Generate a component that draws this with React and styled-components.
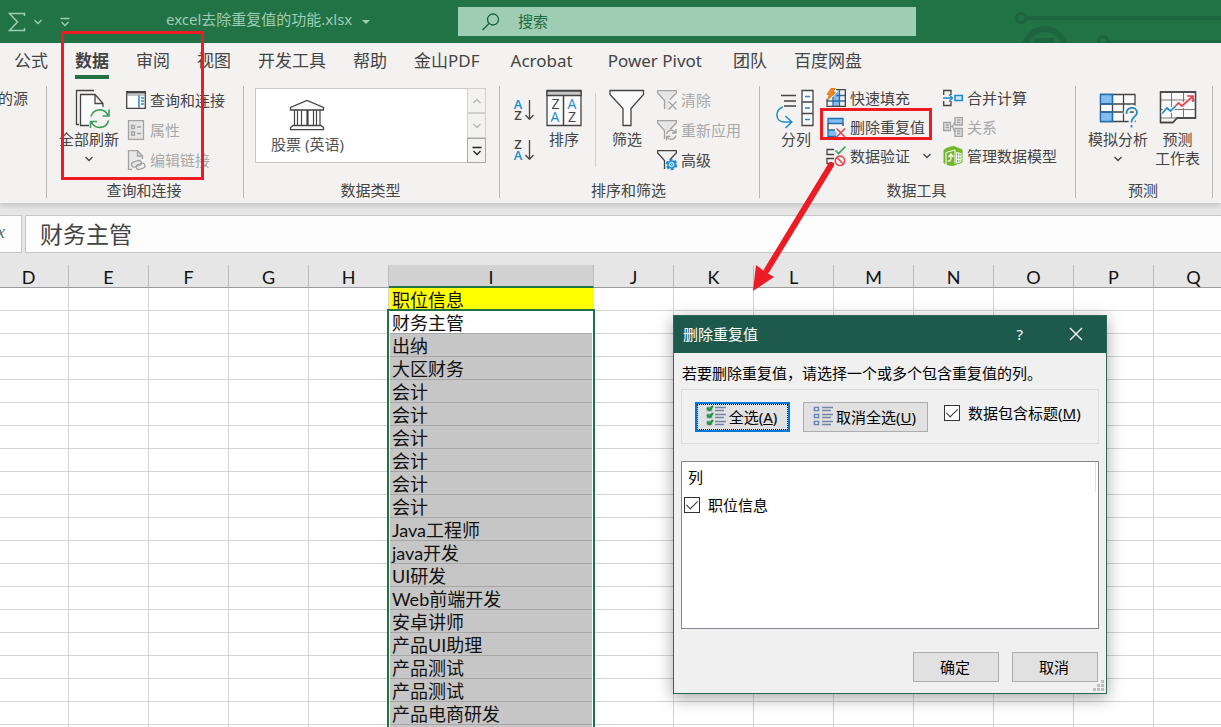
import { useState } from 'react'
import styled, { createGlobalStyle } from 'styled-components'

const UI_FONT = "'Noto Sans', 'Noto Sans CJK SC', sans-serif"
const CELL_FONT = "Lato, 'Noto Sans CJK SC', sans-serif"

const TABS = [
  '公式',
  '数据',
  '审阅',
  '视图',
  '开发工具',
  '帮助',
  '金山PDF',
  'Acrobat',
  'Power Pivot',
  '团队',
  '百度网盘'
]

const COLUMNS = ['D', 'E', 'F', 'G', 'H', 'I', 'J', 'K', 'L', 'M', 'N', 'O', 'P', 'Q']

const ROWS = [
  '职位信息',
  '财务主管',
  '出纳',
  '大区财务',
  '会计',
  '会计',
  '会计',
  '会计',
  '会计',
  '会计',
  'Java工程师',
  'java开发',
  'UI研发',
  'Web前端开发',
  '安卓讲师',
  '产品UI助理',
  '产品测试',
  '产品测试',
  '产品电商研发',
  ''
]

const GlobalStyle = createGlobalStyle`
  * {
    box-sizing: border-box;
  }
  body {
    margin: 0;
    overflow: hidden;
    font-family: ${UI_FONT};
    font-size: 15px;
    color: #444;
  }
  button,
  input {
    font: inherit;
    color: inherit;
  }
`

/* ---------- icons ---------- */

const Svg = styled.svg`
  display: block;
  flex: none;
  fill: none;
  stroke: ${({ $tone }) => $tone || '#444'};
  stroke-width: 1.3;
  overflow: visible;
`

const Icon = ({ w = 20, h = 20, tone, children }) => (
  <Svg width={w} height={h} viewBox={`0 0 ${w} ${h}`} $tone={tone} aria-hidden='true'>
    {children}
  </Svg>
)

const BLUE = '#1e8bcd'
const RED = '#e8414a'
const GREEN = '#3a9e57'
const GRAY = '#a3a3a3'

const Chevron = ({ tone }) => (
  <Icon w={8} h={6} tone={tone}>
    <path d='M.5 1L4 4.5 7.5 1' />
  </Icon>
)

const SigmaIcon = () => (
  <Icon w={18} h={20} tone='#9fcdb3'>
    <path d='M16.5 4V1.5H1.5L9.5 10 1.5 18.5H16.5V16' strokeWidth='1.5' />
  </Icon>
)

const CustomizeIcon = () => (
  <Icon w={10} h={10} tone='#9fcdb3'>
    <path d='M.5 1.5H9.5M1.5 5L5 8.5 8.5 5' />
  </Icon>
)

const SearchIcon = () => (
  <Icon w={18} h={18} tone='#1d5c3a'>
    <circle cx='11' cy='6.5' r='5.5' />
    <path d='M7 10.5L.5 17' />
  </Icon>
)

const RefreshAllIcon = () => (
  <Icon w={40} h={40}>
    <path d='M10 36.500H7.500V2.500H25' />
    <path d='M20 37.500H11.500V6.500H26L34 15.500V20H26L21 26Z' fill='#fafafa' stroke='none' />
    <path d='M20 37.500H11.500V6.500H26L34 15.500V19' />
    <path d='M26 6.500V15.500H34' />
    <g stroke={GREEN} strokeWidth='1.600'>
      <path d='M22 28.500A9 9 0 0 1 39 27.500M40 21.500V28H33.500' />
      <path d='M39.500 32.500A9 9 0 0 1 22.500 34M21.500 40V33.500H28' />
    </g>
  </Icon>
)

const QueriesIcon = () => (
  <Icon>
    <path d='M.7 1.700H19.300V18.300H.7Z' fill='#fff' />
    <path d='M.7 2.500H19.300' strokeWidth='2' />
    <path d='M.7 5H19.300' stroke='#888' strokeWidth='1' />
    <path d='M13 5.500V18' stroke={BLUE} strokeWidth='1.500' />
    <path d='M15 8H18M15 11H18M15 14H18' stroke={BLUE} />
  </Icon>
)

const PropertiesIcon = () => (
  <Icon tone={GRAY}>
    <path d='M2.500.700H17.500V19.300H2.500Z' fill='#e6e6e6' />
    <path d='M5.500 5.500H8.500V8.500H5.500ZM5.500 12H8.500V15H5.500ZM11 7H15M11 13.500H15' />
  </Icon>
)

const EditLinksIcon = () => (
  <Icon tone={GRAY}>
    <path d='M6 19.300H2.500V.700H11.500L16.500 6V9' fill='#e9e9e9' />
    <path d='M11.500.700V6H16.500' />
    <rect x='5.500' y='11.500' width='10' height='5' rx='2.500' transform='rotate(-18 10 14)' />
    <rect x='10' y='14' width='9' height='5' rx='2.500' transform='rotate(-18 14 16)' />
  </Icon>
)

const BankIcon = () => (
  <Icon w={36} h={32}>
    <path d='M1.500 11V8.500L18 1.500 34.500 8.500V11Z' fill='#fafafa' />
    <path d='M5.500 11V26M8.500 11V26M12.500 11V26M18 11V26M19 11V26M24.500 11V26M27.500 11V26M31 11V26' strokeWidth='1.200' />
    <path d='M4 26.500H32L34.500 28.500V30.700H1.500V28.500Z' fill='#fafafa' />
  </Icon>
)

const IconLetter = styled.text`
  font-family: 'Open Sans', sans-serif;
  font-size: ${({ $size }) => $size}px;
  font-weight: ${({ $bold }) => ($bold ? 600 : 400)};
  fill: ${({ $blue }) => ($blue ? BLUE : '#444')};
  stroke: none;
  text-anchor: middle;
`

const SortIcon = ({ desc }) => (
  <Icon w={20} h={24}>
    <IconLetter x='4' y='11' $size={13} $bold $blue={!desc}>
      {desc ? 'Z' : 'A'}
    </IconLetter>
    <IconLetter x='4' y='22' $size={13} $bold $blue={desc}>
      {desc ? 'A' : 'Z'}
    </IconLetter>
    <path d='M15.500 2V21M11.500 17L15.500 21.300 19.500 17' />
  </Icon>
)

const SortDialogIcon = () => (
  <Icon w={36} h={40}>
    <path d='M1 2.500H35V37.500H1Z' fill='#fafafa' />
    <path d='M1 3H35V7.500H1Z' fill='#c8c8c8' />
    <path d='M17.500 8V37' strokeWidth='1.500' />
    <IconLetter x='9.500' y='21' $size={14}>
      Z
    </IconLetter>
    <IconLetter x='9' y='34' $size={14} $blue>
      A
    </IconLetter>
    <IconLetter x='26' y='21' $size={14} $blue>
      A
    </IconLetter>
    <IconLetter x='26' y='34' $size={14}>
      Z
    </IconLetter>
  </Icon>
)

const FilterIcon = () => (
  <Icon w={36} h={40}>
    <path d='M1 2.500H34.500V6.500L22 20.500V37.500H14V20.500L1 6.500Z' fill='#fafafa' />
  </Icon>
)

const FUNNEL = 'M7.500 19V10.500L.700 3V.700H19.300V3L13 9.500'

const ClearIcon = () => (
  <Icon tone={GRAY}>
    <path d='M.700.700H19.300V3L12 10.500V19H7.500V10.500L.700 3Z' fill='#e6e6e6' stroke='none' />
    <path d={FUNNEL} />
    <path d='M11.500 11.500L19.500 19.500M19.500 11.500L11.500 19.500' />
  </Icon>
)

const ReapplyIcon = () => (
  <Icon tone={GRAY}>
    <path d='M.700.700H19.300V3L12 10.500 7.500 10.500.700 3Z' fill='#e6e6e6' stroke='none' />
    <path d={FUNNEL} />
    <path d='M9.500 14A5 5 0 0 1 18.500 12.500M19 9V13H15M19 15.500A5 5 0 0 1 10 17M9.500 20.500V16.500H13.500' />
  </Icon>
)

const AdvancedIcon = () => (
  <Icon>
    <path d={FUNNEL} />
    <g stroke={BLUE}>
      <circle cx='14.500' cy='14.500' r='4.800' strokeWidth='2' strokeDasharray='3 2' />
      <circle cx='14.500' cy='14.500' r='3.500' fill='#bcdcf2' strokeWidth='1.500' />
      <circle cx='14.500' cy='14.500' r='1' strokeWidth='1' fill='#fff' />
    </g>
  </Icon>
)

const SplitIcon = () => (
  <Icon w={40} h={40}>
    <path d='M5 7.500H20M8 13H20M8 18H20' />
    <path d='M26 2.500H37V37.500H26ZM26 14H37M26 25.500H37' fill='#fafafa' />
    <path d='M29 8.500H34M29 20H34M29 31.500H34' stroke={BLUE} strokeWidth='1.600' />
    <path d='M7 19C-1.500 22 -1 34 8 34H15.500M9.500 28L15.800 34 9.500 40' stroke={BLUE} strokeWidth='1.500' />
  </Icon>
)

const FlashFillIcon = () => (
  <Icon>
    <path d='M7 8L12 3H13.500V18H7Z' fill='#83bdec' stroke='none' />
    <path d='M1 13H19M7 9V18M13.500 2V18M10 7.500H19' stroke='#2a6da8' />
    <path d='M10 1.700H19.300V18.300H1V11' />
    <path d='M5 .500H9L7 4.500H9.500L1.500 12 3.500 6.500H1Z' fill='#f08a1d' stroke='#d66a00' strokeWidth='.800' />
  </Icon>
)

const RemoveDuplicatesIcon = () => (
  <Icon>
    <path d='M2 1.500H17V6.500H2Z' fill='#83bdec' stroke='#1f6fb5' />
    <path d='M2 6.500V13M17 6.500V9' />
    <path d='M10 19.500H2V13H8L11 16Z' fill='#83bdec' stroke='none' />
    <path d='M10 19.500H2V13H9' stroke='#1f6fb5' />
    <path d='M10.500 11.500L19 20M19 11.500L10.500 20' stroke={RED} strokeWidth='1.500' />
  </Icon>
)

const ValidationIcon = () => (
  <Icon>
    <path d='M8 3.500H1V8.500H8M8 12.500H1V17.500H8' />
    <path d='M9.500 4.500L12.500 7.500 19.500 .500' stroke={GREEN} strokeWidth='1.600' />
    <circle cx='14' cy='14.800' r='4.700' stroke={RED} strokeWidth='1.600' />
    <path d='M10.800 11.500L17.300 18' stroke={RED} strokeWidth='1.600' />
  </Icon>
)

const ConsolidateIcon = () => (
  <Icon>
    <path d='M.700 7V2.500H8V7M.700 13V17.500H8V13' />
    <path d='M0 10H9M6 6.500L9.500 10 6 13.500' stroke={BLUE} />
    <path d='M12 7.500H19.300V12.500H12Z' fill='#d4e9f8' stroke={BLUE} strokeWidth='1.600' />
  </Icon>
)

const RelationsIcon = () => (
  <Icon tone={GRAY}>
    <path d='M.700 5.500H7.500V13.500H.700ZM12 .700H19.300V8H12ZM12 11.500H19.300V19.300H12Z' fill='#e4e4e4' />
    <path d='M2.500 8H6M2.500 10.500H6M14 3H17.500M14 5.500H17.500M14 14H17.500M14 16.500H17.500M7.500 9.500H9.500L12 5M9.500 9.500L12 15' />
  </Icon>
)

const DataModelIcon = () => (
  <Icon tone='#fff'>
    <path d='M.500 4C4 1 8 0 11 0L19.500 3.500V16.500L10 20C6 20 3 19 .500 17Z' fill='#73b72b' stroke='none' />
    <path d='M3 19V6.500L12 4V17.500' strokeWidth='1' />
    <path d='M4.500 15C8 16 8 13.500 8 9M5.500 11L8 8 10.500 11' />
    <path d='M13.500 6.500L18 7.500V15.500L13.500 17ZM13.500 10L18 10.500M13.500 13.500L18 13M15.800 7V16' strokeWidth='1' />
  </Icon>
)

const WhatIfIcon = () => (
  <Icon w={40} h={40}>
    <path d='M2.500 6.500H37V33.500H2.500Z' fill='#fafafa' />
    <path d='M2.500 6.500H14.500V16H2.500ZM2.500 24H14.500V33.500H2.500Z' fill='#83bdec' stroke='none' />
    <path d='M2.500 16H37M2.500 24H37M14.500 6.500V33.500M25.500 6.500V33.500' />
    <path d='M2.500 6.500H14.500V16H2.500ZM2.500 24H14.500V33.500H2.500Z' stroke='#1f6fb5' />
    <path d='M28.500 26C28 18 39 18 39 24.500C39 29 33.500 28.500 33.500 35' stroke='#f3f2f1' strokeWidth='6' />
    <path d='M28.500 26C28 18 39 18 39 24.500C39 29 33.500 28.500 33.500 34.500M33.500 37V39.500' stroke={BLUE} strokeWidth='1.800' />
  </Icon>
)

const ForecastIcon = () => (
  <Icon w={40} h={40}>
    <path d='M2.500 4H37.500V30H19L15 34.500H2.500Z' fill='#fafafa' />
    <path d='M2.500 12H37M2.500 21.500H37M2.500 30H19M13.500 4V30M25.500 4V30' stroke='#777' strokeWidth='1' />
    <path d='M2.500 34.500V4H37.500V30H19L15 34.500Z' />
    <path d='M4 25.500L9 20 12.500 23 20 15 24 18.500 34 8.500' stroke='#fafafa' strokeWidth='4' />
    <path d='M4 25.500L9 20 12.500 23 18 17.500' stroke={BLUE} strokeWidth='1.700' />
    <path d='M18 17.500L20.500 15 24 18 34.500 8.500M29 8H35V14' stroke={RED} strokeWidth='1.700' />
  </Icon>
)

const ListIcon = ({ checked }) => (
  <Icon w={20} h={20}>
    {[1, 8, 15].map((y) => (
      <g key={y}>
        <path
          d={`M1.500 ${y}.500H5.500V${y + 3}.500H1.500Z`}
          fill='#fff'
          stroke={checked ? '#8793ab' : '#6e83b7'}
          strokeWidth='1.600'
        />
        <path d={`M9 ${y}.500H20M9 ${y + 3}.500H18`} stroke='#7285a8' />
        {checked && <path d={`M1 ${y + 1}L3.500 ${y + 3} 7 ${y - 1}`} stroke='#159a2c' strokeWidth='2' />}
      </g>
    ))}
  </Icon>
)

/* ---------- title bar ---------- */

const Page = styled.div`
  position: relative;
  display: flex;
  flex-direction: column;
  height: 100vh;
  overflow: hidden;
  background: #e6e6e6;
`

const TitleBar = styled.header`
  display: grid;
  grid-template-columns: 458px minmax(0, 458px) 1fr;
  align-items: center;
  flex: none;
  height: 43px;
  background: #217346;
  color: #9fcdb3;
`

const QuickAccess = styled.div`
  display: flex;
  align-items: center;
  padding-left: 8px;
`

const QuickButton = styled.button`
  display: flex;
  align-items: center;
  padding: 0;
  margin-right: ${({ $after }) => $after}px;
  border: 0;
  background: none;
`

const FileName = styled.span`
  margin-right: 10px;
  line-height: 20px;
  padding-bottom: 6px;
`

const Caret = styled.span`
  border: 4px solid transparent;
  border-top-color: #9fcdb3;
  border-bottom: 0;
`

const SearchBox = styled.label`
  display: flex;
  align-items: center;
  gap: 18px;
  height: 29px;
  padding-left: 24px;
  background: #9fcdb3;
`

const SearchInput = styled.input`
  flex: 1;
  min-width: 0;
  padding: 0 0 2px;
  border: 0;
  outline: 0;
  background: none;

  &::placeholder {
    color: #1d6b40;
    opacity: 1;
  }
`

const Circuit = styled.svg`
  justify-self: end;
  fill: none;
  stroke: #1f6440;
`

/* ---------- ribbon ---------- */

const Tabs = styled.nav`
  display: flex;
  flex: none;
  gap: 27px;
  height: 40px;
  padding-left: 14px;
  background: #f3f2f1;
`

const Tab = styled.button`
  height: 36px;
  margin: 0 ${({ $latin }) => ($latin ? 4 : 0)}px;
  padding: 3px 0 0;
  border: 0;
  border-bottom: 4px solid ${({ $active }) => ($active ? '#217346' : 'transparent')};
  background: none;
  font-size: 17px;
  font-weight: ${({ $active }) => ($active ? 700 : 400)};
  line-height: 29px;
  white-space: nowrap;
`

const Ribbon = styled.div`
  position: relative;
  display: flex;
  flex: none;
  padding: 3px 0 5px;
  background: #f3f2f1;
  box-shadow: 0 2px 6px #bdbdbd;
  clip-path: inset(0 0 -10px);
`

const GroupBox = styled.section`
  display: flex;
  flex: none;
  flex-direction: column;
  height: 112px;
  border-right: 1px solid #b8b8b8;
`

const GroupBody = styled.div`
  display: flex;
  flex: 1;
  align-items: flex-start;
  gap: ${({ $gap = 12 }) => $gap}px;
  padding: 0 ${({ $right = 18 }) => $right}px 0 ${({ $left = 12 }) => $left}px;
`

const GroupLabel = styled.div`
  padding-right: 2px;
  line-height: 16px;
  text-align: center;
`

const Group = ({ label, left, right, gap, children }) => (
  <GroupBox>
    <GroupBody $left={left} $right={right} $gap={gap}>
      {children}
    </GroupBody>
    <GroupLabel>{label}</GroupLabel>
  </GroupBox>
)

const LargeButton = styled.button`
  display: flex;
  flex-direction: column;
  align-items: center;
  padding: 2px 0 0;
  border: 0;
  background: none;
  line-height: 19px;
  white-space: nowrap;

  & > svg + span {
    margin-top: 2px;
  }
  & > span + svg {
    margin-top: 7px;
  }
`

const Stack = styled.div`
  display: flex;
  flex-direction: column;
  gap: ${({ $gap = 6 }) => $gap}px;
  padding-top: ${({ $top = 2 }) => $top}px;
  padding-left: ${({ $left = 0 }) => $left}px;
`

const SmallButton = styled.button`
  display: flex;
  align-items: center;
  gap: 4px;
  height: 24px;
  padding: 0;
  border: 0;
  background: none;
  color: ${({ disabled }) => (disabled ? '#a8a8a8' : '#444')};
  white-space: nowrap;

  & > span {
    padding-bottom: 2px;
  }
  & > span + svg {
    margin-left: 9px;
  }
`

const BareButton = styled.button`
  padding: 0;
  border: 0;
  background: none;
`

const ClippedGroup = styled(GroupBox)`
  width: 47px;
  overflow: hidden;
`

const ClippedLabel = styled.span`
  margin-left: -2px;
  line-height: 24px;
`

const InnerRule = styled.div`
  width: 1px;
  height: 74px;
  margin: 7px 1px 0;
  background: #d0d0d0;
`

const Gallery = styled.div`
  display: flex;
  width: 231px;
  height: 75px;
  margin-top: 2px;
  border: 1px solid #c8c8c8;
  background: #fff;
`

const GalleryItem = styled.button`
  display: flex;
  flex-direction: column;
  align-items: center;
  margin-right: auto;
  padding: 10px 0 0 15px;
  border: 0;
  background: none;
  line-height: 20px;
  color: #555;

  & > span {
    margin-top: 3px;
  }
`

const GalleryScroll = styled.div`
  display: flex;
  flex-direction: column;
  width: 19px;
  margin: -1px -1px -1px 0;
`

const GalleryScrollButton = styled.button`
  display: flex;
  flex: 1;
  align-items: center;
  justify-content: center;
  padding: 0;
  border: 1px solid ${({ disabled }) => (disabled ? '#d0d0d0' : '#a8a8a8')};
  background: #f3f2f1;
`

/* ---------- formula bar ---------- */

const FormulaBar = styled.div`
  display: flex;
  flex: none;
  gap: 3px;
  height: 38px;
  margin: 12px 0;
`

const FxButton = styled.button`
  width: 22px;
  padding: 0 16px 4px 0;
  border: 1px solid #c6c6c6;
  border-left: 0;
  background: #fdfdfd;
  color: #666;
  font-family: 'Liberation Serif', serif;
  font-size: 18px;
  font-style: italic;
  direction: rtl;
  overflow: hidden;
`

const FormulaInput = styled.input`
  flex: 1;
  min-width: 0;
  padding: 0 14px 3px;
  border: 1px solid #c6c6c6;
  border-right: 0;
  outline: 0;
  background: #fdfdfd;
  font-family: ${CELL_FONT};
  font-size: 23px;
`

/* ---------- sheet ---------- */

const SheetArea = styled.main`
  position: relative;
  flex: 1;
  min-height: 0;
  overflow: hidden;
  background: linear-gradient(#e6e6e6 23px, #fff 23px);
`

/* the sheet is scrolled a little past the left edge of column D */
const Sheet = styled.table`
  width: 1245px;
  margin-left: -11px;
  border-spacing: 0;
  table-layout: fixed;
  font-family: ${CELL_FONT};
  font-size: 18px;
  line-height: 22px;
  color: #111;
`

const Col = styled.col`
  width: ${({ $wide }) => ($wide ? 205 : 80)}px;
`

const ColumnHead = styled.th`
  height: 23px;
  padding: 2px 0 0;
  border-right: 1px solid #bcbcbc;
  border-bottom: ${({ $active }) => ($active ? '2px solid #217346' : '1px solid #9b9b9b')};
  background: ${({ $active }) => ($active ? '#d2d2d2' : '#e6e6e6')};
  font-weight: 400;
  line-height: 18px;
`

const cellFill = { header: '#ffff00', active: '#fff', selected: '#c6c6c6' }

const Cell = styled.td`
  height: 23px;
  padding: 2px 0 0 3px;
  border-right: 1px solid ${({ $kind }) => ($kind ? cellFill[$kind] : '#d4d4d4')};
  border-bottom: 1px solid ${({ $kind }) => ($kind ? '#a6a6a6' : '#d4d4d4')};
  background: ${({ $kind }) => cellFill[$kind] || '#fff'};
  line-height: 20px;
  white-space: nowrap;
`

const Selection = styled.div`
  position: absolute;
  top: 44px;
  bottom: -4px;
  left: 387px;
  width: 208px;
  border: 2px solid #217346;
  box-shadow: inset 0 0 0 1px #fff;
  pointer-events: none;
`

/* ---------- dialog ---------- */

const DialogBox = styled.div`
  position: absolute;
  top: 315px;
  left: 673px;
  width: 434px;
  border: 1px solid #2c6a58;
  background: #f0f0f0;
  box-shadow: 0 4px 16px rgba(0, 0, 0, 0.35);
  color: #000;
`

const DialogTitle = styled.div`
  display: flex;
  align-items: center;
  height: 37px;
  padding: 0 23px 2px 9px;
  background: #1e5a4b;
  color: #fff;
`

const DialogTitleText = styled.h1`
  flex: 1;
  margin: 0;
  font-size: 15px;
  font-weight: 400;
`

const DialogTitleButton = styled(BareButton)`
  margin-left: 46px;
`

const DialogBody = styled.div`
  padding: 10px 7px 11px;
`

const Message = styled.p`
  margin: 0;
  padding-left: 1px;
  line-height: 20px;
  white-space: nowrap;
`

const OptionsBox = styled.div`
  display: flex;
  align-items: flex-start;
  height: 55px;
  margin-top: 6px;
  padding: 12px 13px;
  border: 1px solid #dcdcdc;
`

const DialogButton = styled.button`
  display: flex;
  align-items: center;
  justify-content: center;
  gap: 3px;
  width: ${({ $width = 86 }) => $width}px;
  height: 30px;
  margin-right: ${({ $after = 0 }) => $after}px;
  padding: 0 2px 2px 0;
  border: ${({ $focused }) => ($focused ? '2px solid #0078d7' : '1px solid #adadad')};
  outline: ${({ $focused }) => ($focused ? '1px dotted #000' : 'none')};
  outline-offset: -3px;
  background: #e1e1e1;
  white-space: nowrap;
`

const CheckLabel = styled.label`
  display: flex;
  align-items: center;
  gap: 8px;
  height: ${({ $height = 22 }) => $height}px;
  white-space: nowrap;

  & > span {
    padding-bottom: 2px;
  }
`

const Checkbox = styled.input.attrs({ type: 'checkbox' })`
  display: grid;
  place-items: center;
  flex: none;
  width: 16px;
  height: 16px;
  margin: 0;
  appearance: none;
  border: 1px solid #333;
  background: #fff;

  &:checked::after {
    content: '';
    width: 5px;
    height: 10px;
    margin-top: -4px;
    border: solid #333;
    border-width: 0 1px 1px 0;
    transform: rotate(45deg);
  }
`

const ColumnList = styled.div`
  height: 168px;
  margin-top: 17px;
  padding: 0 2px;
  border: 1px solid #828790;
  background: #fff;
`

const ColumnListHead = styled.div`
  padding-left: 4px;
  border-right: 1px solid #e2e2e2;
  line-height: 30px;
`

const DialogFooter = styled.div`
  display: flex;
  justify-content: flex-end;
  gap: 13px;
  margin-top: 23px;
  padding-right: 1px;
`

const Grip = styled.svg`
  position: absolute;
  right: 2px;
  bottom: 2px;
  fill: #bdbdbd;
`

/* ---------- red marks ---------- */

const RedFrame = styled.div`
  position: absolute;
  top: ${({ $y }) => $y}px;
  left: ${({ $x }) => $x}px;
  width: ${({ $w }) => $w}px;
  height: ${({ $h }) => $h}px;
  border: 3px solid #ed1c24;
  pointer-events: none;
`

const RedArrow = styled.svg`
  position: absolute;
  top: 160px;
  left: 750px;
  pointer-events: none;
`

const RemoveDuplicatesDialog = () => {
  const [hasHeader, setHasHeader] = useState(true)
  const [jobChecked, setJobChecked] = useState(true)

  return (
    <DialogBox role='dialog' aria-labelledby='dialog-title'>
      <DialogTitle>
        <DialogTitleText id='dialog-title'>删除重复值</DialogTitleText>
        <DialogTitleButton>?</DialogTitleButton>
        <DialogTitleButton aria-label='关闭'>
          <Icon w={14} h={14} tone='#fff'>
            <path d='M1 1L13 13M13 1L1 13' />
          </Icon>
        </DialogTitleButton>
      </DialogTitle>
      <DialogBody>
        <Message>若要删除重复值，请选择一个或多个包含重复值的列。</Message>
        <OptionsBox>
          <DialogButton $width={95} $after={13} $focused onClick={() => setJobChecked(true)}>
            <ListIcon checked />
            <span>
              全选(<u>A</u>)
            </span>
          </DialogButton>
          <DialogButton $width={125} $after={16} onClick={() => setJobChecked(false)}>
            <ListIcon />
            <span>
              取消全选(<u>U</u>)
            </span>
          </DialogButton>
          <CheckLabel>
            <Checkbox checked={hasHeader} onChange={(e) => setHasHeader(e.target.checked)} />
            <span>
              数据包含标题(<u>M</u>)
            </span>
          </CheckLabel>
        </OptionsBox>
        <ColumnList>
          <ColumnListHead>列</ColumnListHead>
          <CheckLabel $height={26}>
            <Checkbox checked={jobChecked} onChange={(e) => setJobChecked(e.target.checked)} />
            <span>职位信息</span>
          </CheckLabel>
        </ColumnList>
        <DialogFooter>
          <DialogButton>确定</DialogButton>
          <DialogButton>取消</DialogButton>
        </DialogFooter>
      </DialogBody>
      <Grip width='11' height='11' aria-hidden='true'>
        <path d='M8 0h3v3h-3zM4 4h3v3h-3zM8 4h3v3h-3zM0 8h3v3h-3zM4 8h3v3h-3zM8 8h3v3h-3z' />
      </Grip>
    </DialogBox>
  )
}

const getCellKind = (column, row) => {
  if (column !== 'I') return undefined
  if (row === 0) return 'header'
  return row === 1 ? 'active' : 'selected'
}

export default function App() {
  const [activeTab, setActiveTab] = useState('数据')
  const [formula, setFormula] = useState('财务主管')

  return (
    <Page>
      <GlobalStyle />
      <TitleBar>
        <QuickAccess>
          <QuickButton $after={8} aria-label='自动求和'>
            <SigmaIcon />
          </QuickButton>
          <QuickButton $after={18} aria-label='更多求和选项'>
            <Chevron tone='#9fcdb3' />
          </QuickButton>
          <QuickButton $after={96} aria-label='自定义快速访问工具栏'>
            <CustomizeIcon />
          </QuickButton>
          <FileName>excel去除重复值的功能.xlsx</FileName>
          <Caret />
        </QuickAccess>
        <SearchBox>
          <SearchIcon />
          <SearchInput placeholder='搜索' aria-label='搜索' />
        </SearchBox>
        <Circuit width='206' height='43' aria-hidden='true'>
          <circle cx='6' cy='18' r='4.500' strokeWidth='3' />
          <path d='M11 18H206' strokeWidth='4' />
          <circle cx='30' cy='49' r='20' strokeWidth='6' />
          <path d='M19 40.500H39' strokeWidth='5' />
          <circle cx='88' cy='41' r='4.500' strokeWidth='3' />
          <path d='M93 42H206' strokeWidth='3' />
        </Circuit>
      </TitleBar>

      <Tabs>
        {TABS.map((name) => (
          <Tab
            key={name}
            $active={name === activeTab}
            $latin={/^[A-Z]/.test(name)}
            onClick={() => setActiveTab(name)}
          >
            {name}
          </Tab>
        ))}
      </Tabs>

      <Ribbon>
        <ClippedGroup>
          <ClippedLabel>的源</ClippedLabel>
        </ClippedGroup>
        <Group label='查询和连接' gap={7}>
          <LargeButton>
            <RefreshAllIcon />
            <span>全部刷新</span>
            <Chevron />
          </LargeButton>
          <Stack>
            <SmallButton>
              <QueriesIcon />
              <span>查询和连接</span>
            </SmallButton>
            <SmallButton disabled>
              <PropertiesIcon />
              <span>属性</span>
            </SmallButton>
            <SmallButton disabled>
              <EditLinksIcon />
              <span>编辑链接</span>
            </SmallButton>
          </Stack>
        </Group>
        <Group label='数据类型' left={11} right={13}>
          <Gallery>
            <GalleryItem>
              <BankIcon />
              <span>股票 (英语)</span>
            </GalleryItem>
            <GalleryScroll>
              <GalleryScrollButton disabled aria-label='上一行'>
                <Icon w={8} h={6} tone='#b5b5b5'>
                  <path d='M.5 5L4 1.5 7.5 5' />
                </Icon>
              </GalleryScrollButton>
              <GalleryScrollButton disabled aria-label='下一行'>
                <Chevron tone='#b5b5b5' />
              </GalleryScrollButton>
              <GalleryScrollButton aria-label='其他'>
                <Icon w={10} h={10} tone='#222'>
                  <path d='M.5 1.5H9.5M1.5 5L5 8.5 8.5 5' />
                </Icon>
              </GalleryScrollButton>
            </GalleryScroll>
          </Gallery>
        </Group>
        <Group label='排序和筛选' left={14}>
          <Stack $top={12} $gap={16}>
            <BareButton aria-label='升序'>
              <SortIcon />
            </BareButton>
            <BareButton aria-label='降序'>
              <SortIcon desc />
            </BareButton>
          </Stack>
          <LargeButton>
            <SortDialogIcon />
            <span>排序</span>
          </LargeButton>
          <InnerRule />
          <LargeButton>
            <FilterIcon />
            <span>筛选</span>
          </LargeButton>
          <Stack>
            <SmallButton disabled>
              <ClearIcon />
              <span>清除</span>
            </SmallButton>
            <SmallButton disabled>
              <ReapplyIcon />
              <span>重新应用</span>
            </SmallButton>
            <SmallButton>
              <AdvancedIcon />
              <span>高级</span>
            </SmallButton>
          </Stack>
        </Group>
        <Group label='数据工具' left={16} gap={10}>
          <LargeButton>
            <SplitIcon />
            <span>分列</span>
          </LargeButton>
          <Stack $top={0} $gap={5}>
            <SmallButton>
              <FlashFillIcon />
              <span>快速填充</span>
            </SmallButton>
            <SmallButton>
              <RemoveDuplicatesIcon />
              <span>删除重复值</span>
            </SmallButton>
            <SmallButton>
              <ValidationIcon />
              <span>数据验证</span>
              <Chevron />
            </SmallButton>
          </Stack>
          <Stack $top={0} $gap={5} $left={2}>
            <SmallButton>
              <ConsolidateIcon />
              <span>合并计算</span>
            </SmallButton>
            <SmallButton disabled>
              <RelationsIcon />
              <span>关系</span>
            </SmallButton>
            <SmallButton>
              <DataModelIcon />
              <span>管理数据模型</span>
            </SmallButton>
          </Stack>
        </Group>
        <Group label='预测' right={12} gap={7}>
          <LargeButton>
            <WhatIfIcon />
            <span>模拟分析</span>
            <Chevron />
          </LargeButton>
          <LargeButton>
            <ForecastIcon />
            <span>
              预测
              <br />
              工作表
            </span>
          </LargeButton>
        </Group>
      </Ribbon>

      <FormulaBar>
        <FxButton aria-label='插入函数'>fx</FxButton>
        <FormulaInput aria-label='编辑栏' value={formula} onChange={(e) => setFormula(e.target.value)} />
      </FormulaBar>

      <SheetArea>
        <Sheet>
          <colgroup>
            {COLUMNS.map((column) => (
              <Col key={column} $wide={column === 'I'} />
            ))}
          </colgroup>
          <thead>
            <tr>
              {COLUMNS.map((column) => (
                <ColumnHead key={column} $active={column === 'I'}>
                  {column}
                </ColumnHead>
              ))}
            </tr>
          </thead>
          <tbody>
            {ROWS.map((value, row) => (
              <tr key={row}>
                {COLUMNS.map((column) => (
                  <Cell key={column} $kind={getCellKind(column, row)}>
                    {column === 'I' ? value : null}
                  </Cell>
                ))}
              </tr>
            ))}
          </tbody>
        </Sheet>
        <Selection />
      </SheetArea>

      <RedFrame $x={61} $y={31} $w={143} $h={149} />
      <RedFrame $x={820} $y={108} $w={112} $h={32} />
      <RemoveDuplicatesDialog />
      <RedArrow width='90' height='134' aria-hidden='true'>
        <path d='M81 5L17 110' stroke='#ed1c24' strokeWidth='6' strokeLinecap='round' />
        <path d='M3 131L6 105 14 111 24 117Z' fill='#ed1c24' />
      </RedArrow>
    </Page>
  )
}
